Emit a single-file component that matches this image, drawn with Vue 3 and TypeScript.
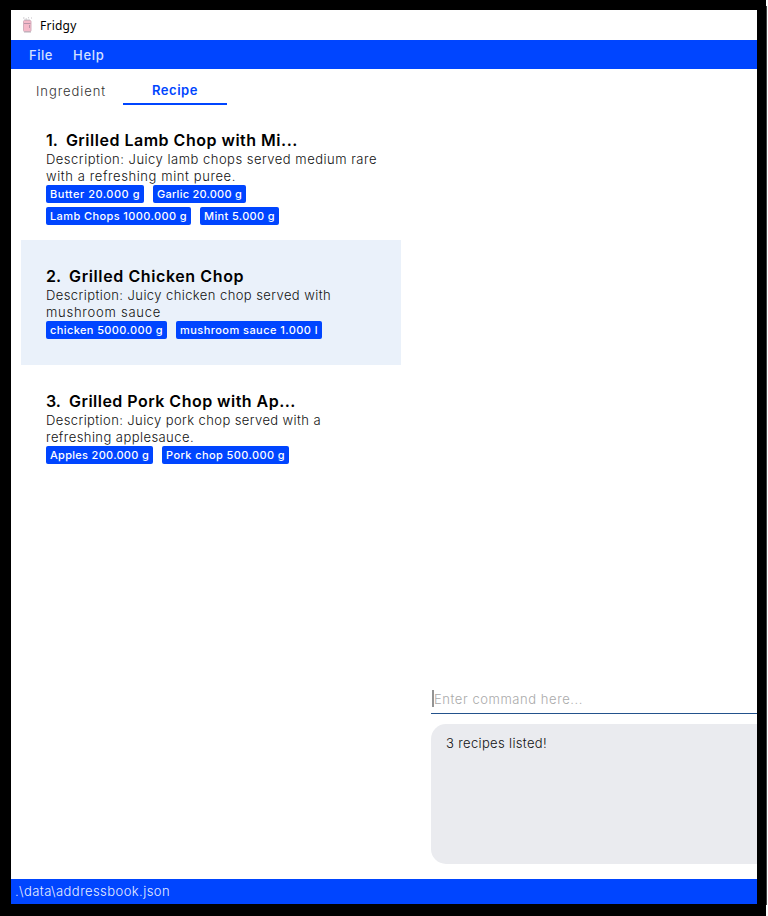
<script setup lang="ts">
interface Text { label: string; width: number }
interface Recipe { id: number; name: Text; description: Text[]; tags: Text[]; selected?: boolean; tall?: boolean }

// Tracks a run of text so that it fills the given width in pixels.
const track = (el: HTMLElement, width: number) => {
  const count = (el.textContent ?? '').length
  el.style.letterSpacing = '0px'
  const natural = el.getBoundingClientRect().width
  el.style.letterSpacing = `${((width - natural) / count).toFixed(3)}px`
}
const vTrack = { mounted: (el: HTMLElement, binding: { value: number }) => track(el, binding.value) }

const recipes: Recipe[] = [
  {
    id: 1,
    name: { label: 'Grilled Lamb Chop with Mi...', width: 232 },
    description: [
      { label: 'Description: Juicy lamb chops served medium rare', width: 331 },
      { label: 'with a refreshing mint puree.', width: 190 },
    ],
    tags: [
      { label: 'Butter 20.000 g', width: 98 },
      { label: 'Garlic 20.000 g', width: 93 },
      { label: 'Lamb Chops 1000.000 g', width: 145 },
      { label: 'Mint 5.000 g', width: 79 },
    ],
    tall: true,
  },
  {
    id: 2,
    name: { label: 'Grilled Chicken Chop', width: 175 },
    description: [
      { label: 'Description: Juicy chicken chop served with', width: 285 },
      { label: 'mushroom sauce', width: 115 },
    ],
    tags: [
      { label: 'chicken 5000.000 g', width: 121 },
      { label: 'mushroom sauce 1.000 l', width: 146 },
    ],
    selected: true,
  },
  {
    id: 3,
    name: { label: 'Grilled Pork Chop with Ap...', width: 227 },
    description: [
      { label: 'Description: Juicy pork chop served with a', width: 275 },
      { label: 'refreshing applesauce.', width: 148 },
    ],
    tags: [
      { label: 'Apples 200.000 g', width: 107 },
      { label: 'Pork chop 500.000 g', width: 127 },
    ],
  },
]
</script>

<template>
  <div class="screen">
    <div class="window">
      <header class="titlebar">
        <svg class="logo" width="12" height="16" viewBox="0 0 12 16">
          <path d="M1 1h1.5M3.5 2h1.5M6 .8h1M9 1h1M2 3h6" stroke="#c5c0c6" stroke-width="1" />
          <rect x="1.5" y="3.5" width="7.5" height="11" rx="1" fill="#f5b9c9" stroke="#d3aebc" stroke-width="1" />
          <path d="M2 6.5h6.5M7.5 8v3" stroke="#b994a8" stroke-width="1" />
          <path d="M2 15h7" stroke="#b9b0b9" stroke-width="1" />
        </svg>
        <span v-track="36.5">Fridgy</span>
      </header>
      <nav class="menubar">
        <div class="file"><span v-track="24">File</span></div>
        <div><span v-track="31.5">Help</span></div>
      </nav>
      <main class="content">
        <section class="left">
          <div class="tabs">
            <div class="tab"><span v-track="70">Ingredient</span></div>
            <div class="tab active"><span v-track="46">Recipe</span></div>
          </div>
          <div class="list">
            <article v-for="r in recipes" :key="r.id" class="card" :class="{ selected: r.selected, tall: r.tall }">
              <h2><span class="num">{{ r.id }}.</span><span v-track="r.name.width">{{ r.name.label }}</span></h2>
              <p v-for="line in r.description" :key="line.label"><span v-track="line.width">{{ line.label }}</span></p>
              <div class="tags">
                <div v-for="t in r.tags" :key="t.label" class="tag"><span v-track="t.width - 8">{{ t.label }}</span></div>
              </div>
            </article>
          </div>
        </section>
        <section class="right">
          <div class="command"><i class="caret"></i><span v-track="149">Enter command here...</span></div>
          <div class="result"><span v-track="101">3 recipes listed!</span></div>
        </section>
      </main>
      <footer class="status"><span v-track="155">.\data\addressbook.json</span></footer>
    </div>
    <div class="edge"></div>
  </div>
</template>

<style>
body { background: #fff; overflow: hidden; }
</style>

<style scoped>
.screen {
  box-sizing: border-box;
  position: relative;
  width: 766px;
  height: 916px;
  padding: 10px 9px 12px 11px;
  background: #000;
  font-family: Inter, "Open Sans", sans-serif;
  font-size: 13px;
  font-weight: 300;
  color: #111;
}
.edge { position: absolute; left: 766px; top: 6px; width: 1px; height: 899px; background: #444; }
.window { display: flex; flex-direction: column; width: 746px; height: 894px; background: #fff; overflow: hidden; white-space: nowrap; }
.titlebar { display: flex; align-items: center; height: 30px; padding-left: 11px; color: #000; font: 12px "Noto Sans", sans-serif; }
.logo { margin-right: 6px; }
.menubar { display: flex; align-items: center; height: 29px; padding-left: 18px; background: #0045ff; color: #d5e0ff; font-weight: 500; }
.file { width: 44px; }
.content { display: flex; flex: 1; }
.left { width: 420px; }
.tabs { display: flex; height: 36px; padding-left: 12px; }
.tab { display: flex; align-items: center; justify-content: center; box-sizing: border-box; width: 96px; height: 36px; padding-top: 8px; color: #333; }
.tab:first-child { margin-right: 4px; }
.tab.active { width: 104px; border-bottom: 2px solid #0045ff; color: #0045ff; font-weight: 600; }
.list { padding-left: 10px; }
.card { box-sizing: border-box; width: 380px; height: 125px; padding: 27px 25px 0; }
.card.tall { height: 135px; padding-top: 26px; }
.card.selected { background: #eaf1fa; }
h2 { display: flex; gap: 8px; margin: 0; height: 20px; line-height: 19px; font-size: 16px; font-weight: 600; color: #000; }
p { margin: 0; line-height: 17px; height: 17px; }
.tags { display: flex; flex-wrap: wrap; gap: 4px 9px; width: 300px; }
.tag { height: 18px; padding: 0 4px; border-radius: 2px; background: #0045ff; color: #fff; font-size: 11px; font-weight: 500; line-height: 18px; }
.right { display: flex; flex-direction: column; justify-content: flex-end; flex: 1; padding-bottom: 15px; }
.command { display: flex; align-items: center; box-sizing: border-box; height: 30px; padding: 1px 0 1px 1px; border-bottom: 1px solid #23528c; color: #aaa; }
.caret { width: 2px; height: 17px; background: #949494; }
.result { box-sizing: border-box; height: 140px; margin-top: 10px; padding: 11px 15px; border-radius: 15px 0 0 15px; background: #eaebef; line-height: 17px; }
.status { height: 25px; padding-left: 4px; background: #0045ff; color: #e7edff; line-height: 25px; }
</style>
